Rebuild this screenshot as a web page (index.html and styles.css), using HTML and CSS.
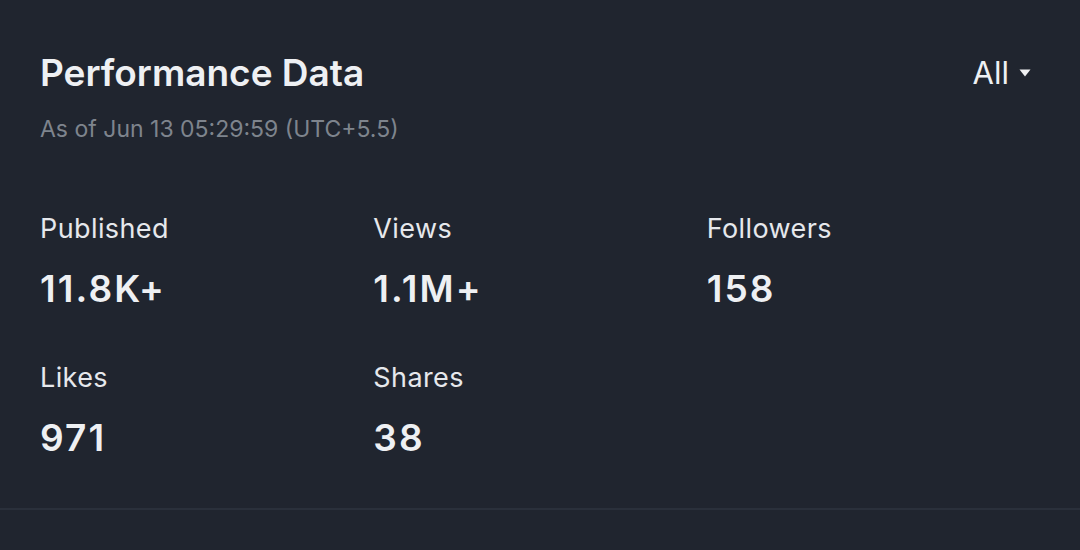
FILE: index.html
```html
<!DOCTYPE html>
<html>
<head>
<meta charset="utf-8">
<link rel="stylesheet" href="styles.css">
</head>
<body>
<section class="panel">
  <div class="header">
    <div class="titles">
      <h1 class="title">Performance Data</h1>
      <div class="subtitle">As of Jun 13 05:29:59 (UTC+5.5)</div>
    </div>
    <div class="filter">All <svg class="caret" width="12" height="8" viewBox="0 0 12 8"><path d="M0.5 0.5h11L6 7.5z" fill="#f0f1f3"/></svg></div>
  </div>
  <div class="stats">
    <div class="stat"><div class="label">Published</div><div class="value">11.8K+</div></div>
    <div class="stat"><div class="label">Views</div><div class="value">1.1M+</div></div>
    <div class="stat"><div class="label">Followers</div><div class="value">158</div></div>
    <div class="stat"><div class="label">Likes</div><div class="value">971</div></div>
    <div class="stat"><div class="label">Shares</div><div class="value">38</div></div>
  </div>
</section>
</body>
</html>
```
FILE: styles.css
```css
html, body {
  margin: 0;
  padding: 0;
  background: #20252f;
  font-family: "Inter", "Noto Sans", sans-serif;
  color: #eef0f3;
}
.panel {
  padding: 50px 40px 0 40px;
  height: 458px;
  border-bottom: 2px solid #2a303b;
}
.header {
  display: flex;
  justify-content: space-between;
  align-items: flex-start;
}
.title {
  margin: 0;
  font-size: 37px;
  line-height: 46px;
  font-weight: 600;
  color: #eef0f3;
}
.subtitle {
  margin-top: 19px;
  font-size: 23px;
  line-height: 28px;
  color: #7e848d;
}
.filter {
  display: flex;
  align-items: center;
  gap: 10px;
  font-size: 31px;
  line-height: 46px;
  padding-right: 9px;
}
.stats {
  margin-top: 69px;
  display: grid;
  grid-template-columns: repeat(3, 1fr);
  row-gap: 50px;
}
.label {
  font-size: 27px;
  line-height: 34px;
  letter-spacing: 0.4px;
  color: #e6e8ec;
}
.value {
  margin-top: 21px;
  font-size: 37px;
  line-height: 44px;
  font-weight: 600;
  letter-spacing: 2.1px;
}
```
